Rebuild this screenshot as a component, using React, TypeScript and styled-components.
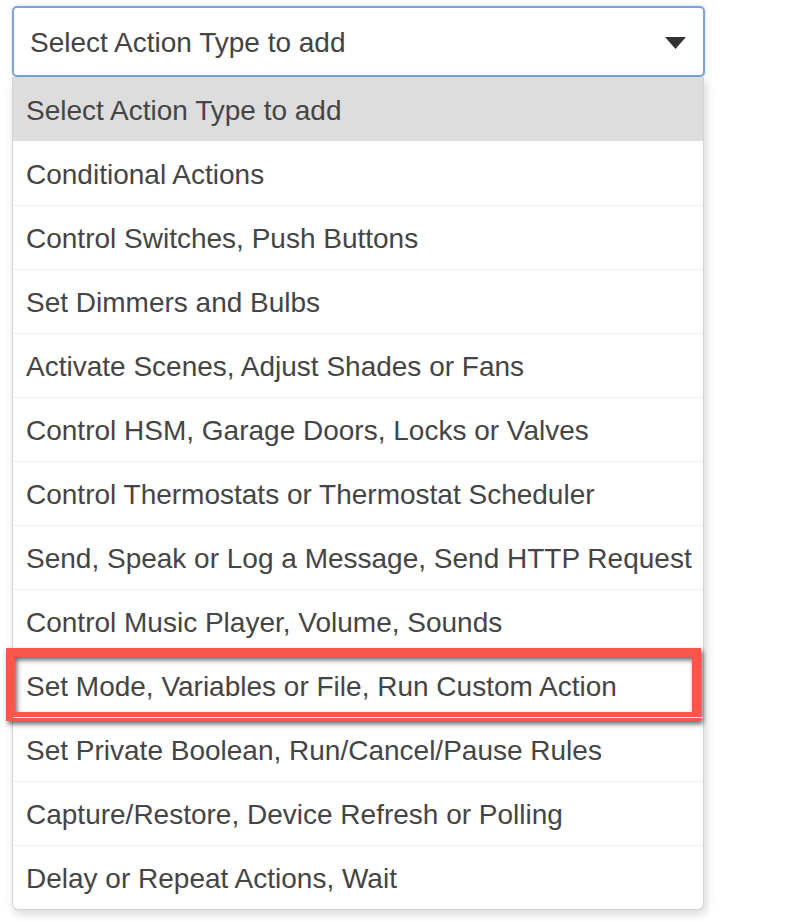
import React from "react";
import styled, { createGlobalStyle } from "styled-components";

const Global = createGlobalStyle`
  html, body { margin: 0; padding: 0; background: #ffffff; }
  body { font-family: "Liberation Sans", Arial, Helvetica, sans-serif; }
`;

const Page = styled.div`
  padding: 6px 0 0 12px;
  width: 804px;
  height: 922px;
  box-sizing: border-box;
`;

const Wrap = styled.div`
  width: 693px;
  display: flex;
  flex-direction: column;
`;

const SelectBox = styled.div`
  box-sizing: border-box;
  height: 71px;
  border: 2px solid #7ea2db;
  border-radius: 5px;
  box-shadow: 0 0 3px rgba(120, 160, 220, 0.45);
  display: flex;
  align-items: center;
  justify-content: space-between;
  padding: 3px 17px 0 16px;
  font-size: 28px;
  color: #444444;
`;

const Caret = styled.svg`
  width: 21px;
  height: 12px;
  display: block;
`;

const Menu = styled.div`
  box-sizing: border-box;
  width: 692px;
  border: 1px solid #d4d4d4;
  border-top: none;
  border-radius: 0 0 6px 6px;
  box-shadow: 2px 4px 10px rgba(0, 0, 0, 0.16);
  background: #ffffff;
  display: flex;
  flex-direction: column;
`;

const Option = styled.div<{ $header?: boolean; $first?: boolean }>`
  position: relative;
  box-sizing: border-box;
  height: 64px;
  display: flex;
  align-items: center;
  padding: 3px 0 0 13px;
  font-size: 28px;
  color: #454545;
  white-space: nowrap;
  background: ${(p) => (p.$header ? "#dddddd" : "transparent")};
  border-top: ${(p) => (p.$header || p.$first ? "none" : "1px solid #efefef")};
`;

const Highlight = styled.div`
  position: absolute;
  left: -7px;
  right: 2px;
  top: -6px;
  bottom: -4px;
  border: 9px solid #f9574a;
  filter: drop-shadow(2px 3px 2.5px rgba(0, 0, 0, 0.6));
  pointer-events: none;
`;

const items = [
  "Conditional Actions",
  "Control Switches, Push Buttons",
  "Set Dimmers and Bulbs",
  "Activate Scenes, Adjust Shades or Fans",
  "Control HSM, Garage Doors, Locks or Valves",
  "Control Thermostats or Thermostat Scheduler",
  "Send, Speak or Log a Message, Send HTTP Request",
  "Control Music Player, Volume, Sounds",
  "Set Mode, Variables or File, Run Custom Action",
  "Set Private Boolean, Run/Cancel/Pause Rules",
  "Capture/Restore, Device Refresh or Polling",
  "Delay or Repeat Actions, Wait",
];

export default function App() {
  return (
    <>
      <Global />
      <Page>
        <Wrap>
          <SelectBox>
            <span>Select Action Type to add</span>
            <Caret viewBox="0 0 21 12">
              <path d="M0 0 H21 L10.5 12 Z" fill="#333333" />
            </Caret>
          </SelectBox>
          <Menu>
            <Option $header>Select Action Type to add</Option>
            {items.map((t, i) => (
              <Option key={t} $first={i === 0}>
                {t}
                {t.startsWith("Set Mode") && <Highlight />}
              </Option>
            ))}
          </Menu>
        </Wrap>
      </Page>
    </>
  );
}
